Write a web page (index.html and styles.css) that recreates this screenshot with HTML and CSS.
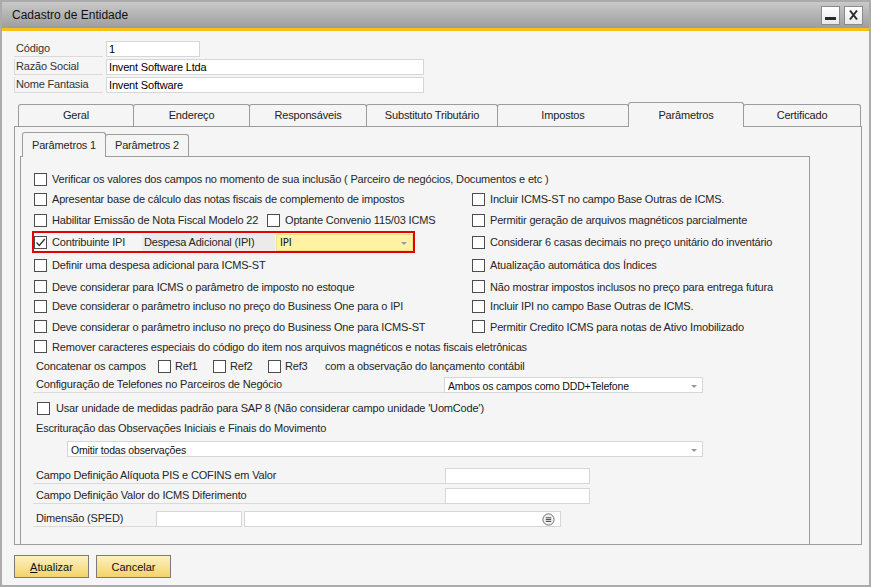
FILE: index.html
```html
<!DOCTYPE html>
<html lang="pt-BR">
<head>
<meta charset="utf-8">
<title>Cadastro de Entidade</title>
<link rel="stylesheet" href="styles.css">
</head>
<body>
<div class="window">
  <div class="titlebar">
    <span class="title">Cadastro de Entidade</span>
    <div class="winbtns">
      <span class="wbtn"><span class="minbar"></span></span>
      <span class="wbtn"><svg width="11" height="12" viewBox="0 0 11 12"><path d="M2 1.5 L9 10.5 M9 1.5 L2 10.5" stroke="#2a2a2a" stroke-width="2"/></svg></span>
    </div>
  </div>
  <div class="body">
    <div class="fields">
      <div class="frow"><span class="flabel">Código</span><span class="finput short">1</span></div>
      <div class="frow"><span class="flabel boxed">Razão Social</span><span class="finput long">Invent Software Ltda</span></div>
      <div class="frow"><span class="flabel boxed">Nome Fantasia</span><span class="finput long">Invent Software</span></div>
    </div>

    <div class="tabs">
      <span class="tab w116">Geral</span>
      <span class="tab w117">Endereço</span>
      <span class="tab w118">Responsáveis</span>
      <span class="tab w132">Substituto Tributário</span>
      <span class="tab w132">Impostos</span>
      <span class="tab w116 active">Parâmetros</span>
      <span class="tab w118">Certificado</span>
    </div>

    <div class="panel">
      <div class="subtabs">
        <span class="subtab active">Parâmetros 1</span>
        <span class="subtab">Parâmetros 2</span>
      </div>
      <div class="inner">
        <div class="row r1"><span class="chk"><span class="cb"></span>Verificar os valores dos campos no momento de sua inclusão ( Parceiro de negócios, Documentos e etc )</span></div>

        <div class="grid2">
          <div class="cell"><span class="chk"><span class="cb"></span>Apresentar base de cálculo das notas fiscais de complemento de impostos</span></div>
          <div class="cell"><span class="chk"><span class="cb"></span>Incluir ICMS-ST no campo Base Outras de ICMS.</span></div>

          <div class="cell"><span class="chk w233"><span class="cb"></span>Habilitar Emissão de Nota Fiscal Modelo 22</span><span class="chk"><span class="cb"></span>Optante Convenio 115/03 ICMS</span></div>
          <div class="cell"><span class="chk"><span class="cb"></span>Permitir geração de arquivos magnéticos parcialmente</span></div>

          <div class="cell">
            <div class="redbox">
              <span class="chk w108"><span class="cb checked"><svg width="11" height="11" viewBox="0 0 11 11"><path d="M1.5 5.5 L4.3 8.5 L9.8 2" fill="none" stroke="#333" stroke-width="1.3"/></svg></span>Contribuinte IPI</span>
              <span class="graylabel">Despesa Adicional (IPI)</span>
              <span class="select yellow">IPI<span class="arrow"></span></span>
            </div>
          </div>
          <div class="cell"><span class="chk"><span class="cb"></span>Considerar 6 casas decimais no preço unitário do inventário</span></div>

          <div class="cell"><span class="chk"><span class="cb"></span>Definir uma despesa adicional para ICMS-ST</span></div>
          <div class="cell"><span class="chk"><span class="cb"></span>Atualização automática dos Índices</span></div>

          <div class="cell"><span class="chk"><span class="cb"></span>Deve considerar para ICMS o parâmetro de imposto no estoque</span></div>
          <div class="cell"><span class="chk"><span class="cb"></span>Não mostrar impostos inclusos no preço para entrega futura</span></div>

          <div class="cell"><span class="chk"><span class="cb"></span>Deve considerar o parâmetro incluso no preço do Business One para o IPI</span></div>
          <div class="cell"><span class="chk"><span class="cb"></span>Incluir IPI no campo Base Outras de ICMS.</span></div>

          <div class="cell"><span class="chk"><span class="cb"></span>Deve considerar o parâmetro incluso no preço do Business One para ICMS-ST</span></div>
          <div class="cell"><span class="chk"><span class="cb"></span>Permitir Credito ICMS para notas de Ativo Imobilizado</span></div>
        </div>

        <div class="row r9"><span class="chk"><span class="cb"></span>Remover caracteres especiais do código do item nos arquivos magnéticos e notas fiscais eletrônicas</span></div>

        <div class="row r10">
          <span class="txt w122">Concatenar os campos</span>
          <span class="chk w55 tight"><span class="cb"></span>Ref1</span>
          <span class="chk w55 tight"><span class="cb"></span>Ref2</span>
          <span class="chk w57 tight"><span class="cb"></span>Ref3</span>
          <span class="txt">com a observação do lançamento contábil</span>
        </div>

        <div class="row r11">
          <span class="ulabel">Configuração de Telefones no Parceiros de Negócio</span>
          <span class="select s259">Ambos os campos como DDD+Telefone<span class="arrow"></span></span>
        </div>

        <div class="row r12"><span class="chk"><span class="cb"></span>Usar unidade de medidas padrão para SAP 8 (Não considerar campo unidade 'UomCode')</span></div>

        <div class="row r13"><span class="txt">Escrituração das Observações Iniciais e Finais do Movimento</span></div>

        <div class="row r14"><span class="select s636">Omitir todas observações<span class="arrow"></span></span></div>

        <div class="row r15">
          <span class="ulabel">Campo Definição Alíquota PIS e COFINS em Valor</span>
          <span class="tinput w145"></span>
        </div>
        <div class="row r16">
          <span class="ulabel">Campo Definição Valor do ICMS Diferimento</span>
          <span class="tinput w145"></span>
        </div>
        <div class="row r17">
          <span class="ulabel w123">Dimensão (SPED)</span>
          <span class="tinput w85"></span>
          <span class="tinput w317 withicon">
            <svg class="menuicon" width="13" height="13" viewBox="0 0 13 13"><circle cx="6.5" cy="6.5" r="5.6" fill="#f2f2f2" stroke="#6f6f6f" stroke-width="1"/><path d="M3.8 4.8 H9.2 M3.8 6.6 H9.2 M3.8 8.4 H9.2" stroke="#444" stroke-width="1"/></svg>
          </span>
        </div>
      </div>
    </div>

    <div class="actions">
      <button class="btn"><u>A</u>tualizar</button>
      <button class="btn">Cancelar</button>
    </div>
  </div>
</div>
</body>
</html>
```

FILE: styles.css
```css
* { box-sizing: border-box; }

html, body {
  margin: 0;
  padding: 0;
  background: #ffffff;
}

body {
  font-family: "Liberation Sans", Arial, sans-serif;
  font-size: 11px;
  letter-spacing: -0.17px;
  color: #262626;
}

.window {
  width: 871px;
  height: 587px;
  border: 2px solid #ababab;
  background: #f5f5f5;
  display: flex;
  flex-direction: column;
}

/* ---------- title bar ---------- */
.titlebar {
  height: 29px;
  flex: none;
  background: linear-gradient(#c9c9c9, #9d9d9d);
  border-bottom: 3px solid #f7c01a;
  display: flex;
  align-items: center;
  justify-content: space-between;
  padding: 0 6px 0 10px;
}

.title {
  font-size: 12px;
  letter-spacing: 0;
  color: #111;
}

.winbtns {
  display: flex;
  gap: 4px;
}

.wbtn {
  width: 19px;
  height: 19px;
  background: linear-gradient(#ffffff, #e9e9e9);
  border: 1px solid #8a8a8a;
  display: flex;
  align-items: center;
  justify-content: center;
}

.minbar {
  width: 11px;
  height: 3px;
  background: #2a2a2a;
  margin-top: 7px;
}

/* ---------- body ---------- */
.body {
  flex: 1;
  padding: 10px 0 0 12px;
}

.fields {
  display: flex;
  flex-direction: column;
  gap: 2px;
}

.frow {
  display: flex;
  height: 16px;
}

.flabel {
  width: 89px;
  margin-right: 3px;
  padding-left: 2px;
  line-height: 14px;
  color: #333;
  border-bottom: 1px solid #dadada;
}

.flabel.boxed {
  border-left: 1px solid #dadada;
  padding-left: 1px;
}

.finput {
  background: #fff;
  border: 1px solid #d6d6d6;
  padding-left: 2px;
  line-height: 15px;
  color: #000;
}

.finput.short { width: 94px; }
.finput.long { width: 318px; }

/* ---------- main tabs ---------- */
.tabs {
  display: flex;
  align-items: flex-end;
  height: 24px;
  margin-top: 9px;
  padding-left: 4px;
}

.tab {
  height: 22px;
  border: 1px solid #9c9c9c;
  border-bottom: none;
  border-radius: 3px 3px 0 0;
  margin-left: -1px;
  background: #f5f5f5;
  text-align: center;
  line-height: 20px;
  color: #222;
  white-space: nowrap;
}

.tab:first-child { margin-left: 0; }

.tab.active {
  height: 25px;
  margin-bottom: -1px;
  position: relative;
  z-index: 1;
  line-height: 24px;
}

.w116 { width: 116px; }
.w117 { width: 117px; }
.w118 { width: 118px; }
.w132 { width: 132px; }

.panel {
  width: 848px;
  height: 419px;
  border: 1px solid #9c9c9c;
  padding: 5px 0 0 5px;
  display: flex;
  flex-direction: column;
}

.subtabs {
  display: flex;
  align-items: flex-end;
  height: 24px;
  padding-left: 2px;
}

.subtab {
  width: 84px;
  height: 22px;
  border: 1px solid #9c9c9c;
  border-bottom: none;
  border-radius: 3px 3px 0 0;
  margin-left: -1px;
  padding: 0;
  text-align: center;
  white-space: nowrap;
  line-height: 21px;
  background: #f5f5f5;
}

.subtab.active {
  height: 25px;
  margin-left: 0;
  margin-bottom: -1px;
  line-height: 25px;
  position: relative;
  z-index: 1;
}

.inner {
  width: 790px;
  flex: 1;
  border: 1px solid #9c9c9c;
  border-bottom: none;
  padding: 12px 0 0 13px;
  display: flex;
  flex-direction: column;
}

.row {
  display: flex;
  align-items: center;
}

.r1 { height: 20px; }

.grid2 {
  display: grid;
  grid-template-columns: 438px 1fr;
  grid-template-rows: 20px 22px 22px 24px 19px 20px 21px;
}

.cell {
  display: flex;
  align-items: center;
}

.chk {
  display: inline-flex;
  align-items: center;
  white-space: nowrap;
}

.cb {
  width: 13px;
  height: 13px;
  flex: none;
  border: 1px solid #4d4d4d;
  background: #fff;
  margin-right: 5px;
  display: inline-flex;
  align-items: center;
  justify-content: center;
}

.chk.tight .cb { margin-right: 4px; }

.w233 { width: 233px; }
.w108 { width: 108px; }
.w55 { width: 55px; }
.w57 { width: 57px; }
.w122 { width: 124px; padding-left: 2px; }

.redbox {
  display: flex;
  align-items: center;
  width: 383px;
  height: 22px;
  margin-left: -2px;
  border: 2px solid #e40000;
}

.graylabel {
  width: 133px;
  height: 17px;
  background: #ebebeb;
  padding-left: 2px;
  line-height: 16px;
}

.select {
  position: relative;
  height: 17px;
  background: #fff;
  border: 1px solid #d6d6d6;
  padding-left: 3px;
  line-height: 16px;
  font-size: 10.5px;
  color: #111;
  white-space: nowrap;
}

.select.yellow {
  width: 137px;
  margin-left: 1px;
  background: #fff2a3;
  border-color: #f0e28a;
  font-family: "DejaVu Sans", sans-serif;
  font-size: 10px;
}

.arrow {
  position: absolute;
  right: 5px;
  top: 7px;
  width: 0;
  height: 0;
  border-left: 3px solid transparent;
  border-right: 3px solid transparent;
  border-top: 3px solid #9a9a9a;
}

.r9 { height: 19px; }
.r10 { height: 20px; }

.txt { white-space: nowrap; }

.r11 {
  height: 16px;
  margin-top: 1px;
  margin-left: -1px;
  align-items: stretch;
}

.ulabel {
  flex: none;
  width: 411px;
  padding-left: 3px;
  border-bottom: 1px solid #dadada;
  line-height: 15px;
  white-space: nowrap;
}

.s259 { width: 259px; height: 16px; }

.r12 { height: 20px; margin-top: 5px; padding-left: 3px; }
.r12 .cb { margin-right: 6px; }

.r13 { height: 20px; padding-left: 2px; }

.r14 { height: 16px; margin-top: 3px; padding-left: 33px; }
.s636 { width: 636px; height: 16px; }

.r15, .r16, .r17 {
  height: 16px;
  margin-left: -1px;
  align-items: stretch;
}

.r15 { margin-top: 11px; }
.r16 { margin-top: 4px; }
.r17 { margin-top: 7px; }

.r15 .ulabel, .r16 .ulabel { width: 412px; }
.ulabel.w123 { width: 123px; }

.tinput {
  background: #fff;
  border: 1px solid #d6d6d6;
  height: 16px;
}

.w145 { width: 145px; }
.w85 { width: 86px; }
.w317 { width: 317px; margin-left: 2px; }

.withicon {
  display: flex;
  align-items: center;
  justify-content: flex-end;
  padding-right: 5px;
}

/* ---------- buttons ---------- */
.actions {
  display: flex;
  gap: 7px;
  margin-top: 10px;
}

.btn {
  width: 75px;
  height: 23px;
  border: 1px solid #7b7b7b;
  background: linear-gradient(#fdf1c2, #f3d36a);
  font-family: "Liberation Sans", Arial, sans-serif;
  font-size: 11px;
  color: #111;
  padding: 0;
}

.btn u { text-decoration: underline; }
```
